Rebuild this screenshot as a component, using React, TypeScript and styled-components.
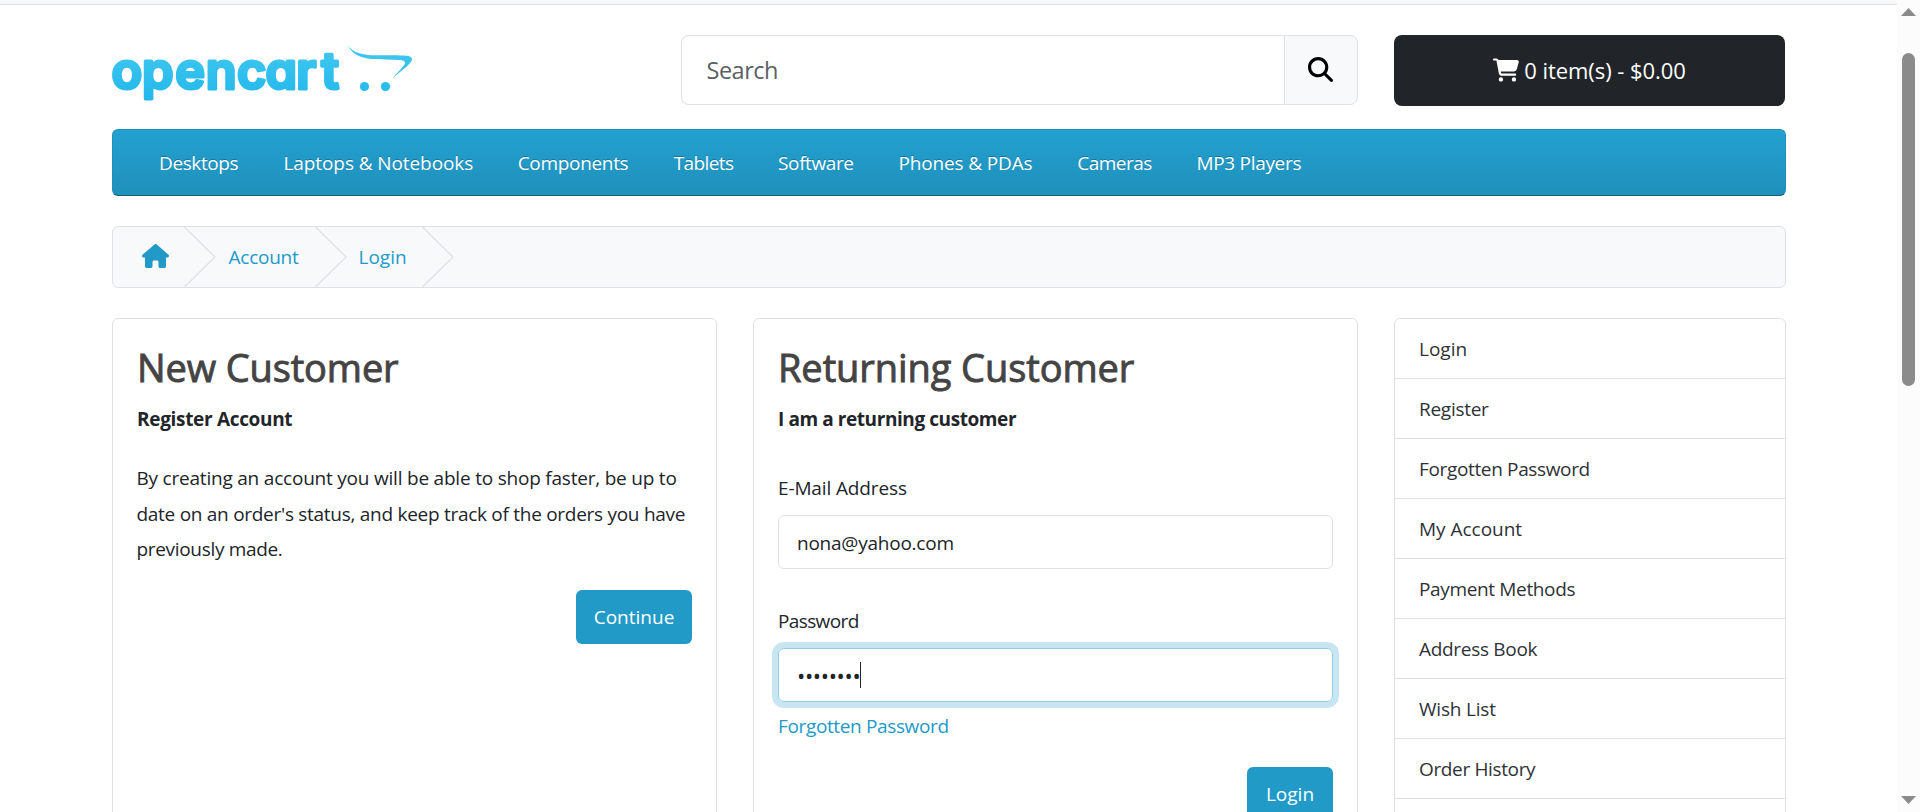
import React from 'react';
import styled, { createGlobalStyle } from 'styled-components';
import { FaHouse, FaMagnifyingGlass, FaCartShopping } from 'react-icons/fa6';

const GlobalStyle = createGlobalStyle`
  *, *::before, *::after { box-sizing: border-box; }
  html, body { margin: 0; padding: 0; height: 812px; overflow: hidden; background: #fff; }
  body {
    font-family: "Open Sans", "Noto Sans", sans-serif;
    font-size: 19px;
    line-height: 36px;
    color: #212529;
    letter-spacing: -0.27px;
  }
  input, button { font: inherit; letter-spacing: inherit; color: inherit; margin: 0; }
  a { color: inherit; text-decoration: none; }
`;

const Viewport = styled.div`
  display: flex;
  height: 812px;
  overflow: hidden;
`;

const Page = styled.div`
  flex: 1;
  min-width: 0;
`;

const TopBar = styled.div`
  height: 5px;
  background: #f8f9fa;
  border-bottom: 1px solid #dee2e6;
`;

const Container = styled.div`
  width: 1674px;
  margin-left: 112px;
`;

const Header = styled.header`
  display: flex;
  align-items: flex-start;
  height: 124px;
  padding-top: 30px;
`;

const LogoLink = styled.a`
  width: 569px;
  height: 71px;
`;

const LogoSvg = styled.svg`
  display: block;
  overflow: visible;
`;

const Wordmark = styled.text`
  font-family: Inter, sans-serif;
  font-weight: 600;
  font-size: 50.5px;
  letter-spacing: 0;
  font-feature-settings: "cv11";
`;

const SearchGroup = styled.form`
  display: flex;
  width: 677px;
  height: 70px;
`;

const SearchInput = styled.input`
  flex: 1;
  min-width: 0;
  padding: 0 25px 0 24.5px;
  border: 1px solid #dee2e6;
  border-right: 0;
  border-radius: 8px 0 0 8px;
  background: #fff;
  font-size: 23.5px;
  letter-spacing: -0.5px;
  outline: none;
  &::placeholder { color: #5b6065; opacity: 1; }
`;

const SearchButton = styled.button`
  display: flex;
  align-items: center;
  justify-content: center;
  width: 74px;
  padding: 0 2px 1px 0;
  border: 1px solid #dee2e6;
  border-radius: 0 8px 8px 0;
  background: #f8f9fa;
  color: #000;
`;

const CartButton = styled.button`
  display: flex;
  align-items: center;
  justify-content: center;
  gap: 5px;
  width: 391px;
  height: 71px;
  margin-left: 36px;
  padding: 0 0 2px;
  border: 0;
  border-radius: 8px;
  background: #212529;
  color: #fff;
  font-size: 22px;
  letter-spacing: -0.06px;
`;

const Menu = styled.nav`
  display: grid;
  grid-template-columns: 124.5px 234.2px 156px 104.4px 120.4px 178.9px 119.1px auto;
  align-items: center;
  height: 67px;
  padding: 1px 0 0 46px;
  border: 1px solid #1f90bb;
  border-bottom-color: #145e7a;
  border-radius: 6px;
  background: linear-gradient(to bottom, #23a1d1, #1f90bb);
  color: #fff;
  text-shadow: 0 -1px 0 rgba(0, 0, 0, 0.25);
`;

const MenuLink = styled.a<{ $track: number }>`
  letter-spacing: ${(p) => p.$track}px;
`;

const Crumbs = styled.div`
  display: flex;
  align-items: center;
  height: 62px;
  margin: 30px 0;
  border: 1px solid #dee2e6;
  border-radius: 6px;
  background: #f8f9fa;
  color: #229ac8;
`;

const Crumb = styled.a<{ $width: number; $indent: number; $track?: number }>`
  display: flex;
  align-items: center;
  width: ${(p) => p.$width}px;
  padding-left: ${(p) => p.$indent}px;
  letter-spacing: ${(p) => p.$track ?? 0}px;
`;

const HomeIcon = styled(FaHouse)`
  width: 27px;
  height: 24px;
  margin-bottom: 3px;
`;

const ChevronSvg = styled.svg`
  flex: none;
  display: block;
  fill: none;
  stroke: #dfe3e7;
`;

const Columns = styled.div`
  display: grid;
  grid-template-columns: 605px 605px 392px;
  column-gap: 36px;
  align-items: start;
`;

const Card = styled.section`
  height: 560px;
  padding: 24px;
  border: 1px solid #dee2e6;
  border-radius: 6px;
`;

const Title = styled.h2<{ $track: number }>`
  margin: 0;
  font-size: 38px;
  font-weight: 400;
  line-height: 48px;
  letter-spacing: ${(p) => p.$track}px;
  color: #444;
  -webkit-text-stroke: 0.9px #444;
`;

const Lead = styled.strong<{ $track: number }>`
  display: block;
  margin-top: 10px;
  font-weight: 700;
  letter-spacing: ${(p) => p.$track}px;
`;

const Copy = styled.p`
  margin: 24px 0 22.5px -0.5px;
  line-height: 35.5px;
  white-space: nowrap;
`;

const CopyLine = styled.span<{ $track: number }>`
  display: block;
  letter-spacing: ${(p) => p.$track}px;
`;

const Actions = styled.div`
  display: flex;
  justify-content: flex-end;
`;

const PrimaryButton = styled.button<{ $width: number }>`
  width: ${(p) => p.$width}px;
  height: 54px;
  padding: 0;
  border: 0;
  border-radius: 6px;
  background: #229ac8;
  color: #fff;
  letter-spacing: 0;
`;

const Form = styled.form`
  display: flex;
  flex-direction: column;
`;

const FieldLabel = styled.label<{ $gap: number; $track: number }>`
  margin: ${(p) => p.$gap}px 0 9px;
  letter-spacing: ${(p) => p.$track}px;
`;

const TextInput = styled.input`
  width: 555px;
  height: 54px;
  padding: 1px 18px 0;
  border: 1px solid #dee2e6;
  border-radius: 6px;
  outline: none;
  letter-spacing: -0.23px;
`;

const PasswordBox = styled.div`
  display: flex;
  align-items: center;
  width: 555px;
  height: 54px;
  padding: 0 18px;
  border: 1px solid #91cde4;
  border-radius: 6px;
  box-shadow: 0 0 0 6px #c8e6f1;
  font-size: 22px;
  letter-spacing: -0.36px;
`;

const Caret = styled.span`
  width: 1px;
  height: 26px;
  background: #212529;
`;

const ForgottenLink = styled.a`
  margin: 6px 0 23px;
  color: #229ac8;
  letter-spacing: -0.36px;
`;

const SideList = styled.nav`
  display: flex;
  flex-direction: column;
  height: 560px;
  border: 1px solid #dee2e6;
  border-radius: 6px;
`;

const SideLink = styled.a<{ $track: number }>`
  display: flex;
  align-items: center;
  height: 60px;
  padding-left: 24px;
  border-bottom: 1px solid #dee2e6;
  color: #2e3236;
  letter-spacing: ${(p) => p.$track}px;
`;

const Scrollbar = styled.aside`
  display: flex;
  flex-direction: column;
  align-items: center;
  width: 23px;
  height: 812px;
  padding: 8px 0;
  background: #fcfcfc;
`;

const ScrollArrow = styled.svg`
  display: block;
  fill: #8b8b8b;
`;

const ScrollThumb = styled.div`
  width: 13px;
  height: 333px;
  margin: 37px 0 auto;
  border-radius: 6.5px;
  background: #8b8b8b;
`;

const menu = [
  { label: 'Desktops', track: -0.39 },
  { label: 'Laptops & Notebooks', track: -0.09 },
  { label: 'Components', track: -0.32 },
  { label: 'Tablets', track: -0.6 },
  { label: 'Software', track: -0.4 },
  { label: 'Phones & PDAs', track: -0.15 },
  { label: 'Cameras', track: -0.55 },
  { label: 'MP3 Players', track: -0.31 },
];

const accountLinks = [
  { label: 'Login', track: 0 },
  { label: 'Register', track: -0.27 },
  { label: 'Forgotten Password', track: -0.35 },
  { label: 'My Account', track: -0.02 },
  { label: 'Payment Methods', track: -0.35 },
  { label: 'Address Book', track: -0.3 },
  { label: 'Wish List', track: -0.2 },
  { label: 'Order History', track: -0.36 },
];

const Logo = () => (
  <LogoSvg width="302" height="71" viewBox="112 35 302 71">
    <defs>
      <linearGradient id="sky" gradientUnits="userSpaceOnUse" x1="0" y1="46" x2="0" y2="103">
        <stop offset="0" stopColor="#42c8ef" />
        <stop offset="0.75" stopColor="#28bbec" />
        <stop offset="1" stopColor="#22b7e9" />
      </linearGradient>
    </defs>
    <g fill="url(#sky)">
      <Wordmark
        x="111.4 141.9 175.2 205.8 237 265.400 296.300 321.200"
        y="89.4"
        stroke="url(#sky)"
        strokeWidth="3.2"
        strokeLinejoin="round"
      >
        opencart
      </Wordmark>
      <path d="M348 45.5C353 52.5 362 55.3 376 55.3C388 55.3 399 54.8 406.5 55.8C411.5 56.5 413.2 58.4 411.2 61.6C408 66.5 400 72 392.7 78C396.5 73.5 401.5 68.5 404.2 65C406.3 62.2 404.5 60.5 400 60C391 59.2 380 60 371 59C358 57.6 351.5 53 348 45.5Z" />
      <circle cx="364.5" cy="86.5" r="4.6" />
      <circle cx="385.5" cy="86.5" r="4.6" />
    </g>
  </LogoSvg>
);

const Chevron = () => (
  <ChevronSvg width="32" height="60" viewBox="0 0 32 60">
    <path d="M0.5 0L31 30L0.5 60" strokeWidth="1.3" />
  </ChevronSvg>
);

export default function App() {
  return (
    <>
      <GlobalStyle />
      <Viewport>
        <Page>
          <TopBar />
          <Container>
            <Header>
              <LogoLink href="#">
                <Logo />
              </LogoLink>
              <SearchGroup>
                <SearchInput placeholder="Search" />
                <SearchButton type="button" aria-label="Search">
                  <FaMagnifyingGlass size={25} />
                </SearchButton>
              </SearchGroup>
              <CartButton type="button">
                <FaCartShopping size={26} />
                <span>0 item(s) - $0.00</span>
              </CartButton>
            </Header>

            <Menu>
              {menu.map((m) => (
                <MenuLink key={m.label} href="#" $track={m.track}>
                  {m.label}
                </MenuLink>
              ))}
            </Menu>

            <Crumbs>
              <Crumb href="#" $width={71} $indent={29}>
                <HomeIcon />
              </Crumb>
              <Chevron />
              <Crumb href="#" $width={99} $indent={12.5} $track={-0.24}>
                Account
              </Crumb>
              <Chevron />
              <Crumb href="#" $width={75} $indent={11.5}>
                Login
              </Crumb>
              <Chevron />
            </Crumbs>

            <Columns>
              <Card>
                <Title $track={-0.13}>New Customer</Title>
                <Lead $track={-0.32}>Register Account</Lead>
                <Copy>
                  <CopyLine $track={-0.21}>
                    By creating an account you will be able to shop faster, be up to
                  </CopyLine>
                  <CopyLine $track={-0.28}>
                    date on an order's status, and keep track of the orders you have
                  </CopyLine>
                  <CopyLine $track={-0.32}>previously made.</CopyLine>
                </Copy>
                <Actions>
                  <PrimaryButton type="button" $width={116}>
                    Continue
                  </PrimaryButton>
                </Actions>
              </Card>

              <Card>
                <Title $track={-0.08}>Returning Customer</Title>
                <Lead $track={-0.42}>I am a returning customer</Lead>
                <Form>
                  <FieldLabel $gap={33} $track={-0.13}>
                    E-Mail Address
                  </FieldLabel>
                  <TextInput readOnly value="nona@yahoo.com" />
                  <FieldLabel $gap={34} $track={-0.62}>
                    Password
                  </FieldLabel>
                  <PasswordBox>
                    ••••••••
                    <Caret />
                  </PasswordBox>
                  <ForgottenLink href="#">Forgotten Password</ForgottenLink>
                  <Actions>
                    <PrimaryButton type="button" $width={86}>
                      Login
                    </PrimaryButton>
                  </Actions>
                </Form>
              </Card>

              <SideList>
                {accountLinks.map((item) => (
                  <SideLink key={item.label} href="#" $track={item.track}>
                    {item.label}
                  </SideLink>
                ))}
              </SideList>
            </Columns>
          </Container>
        </Page>
        <Scrollbar>
          <ScrollArrow width="15" height="8" viewBox="0 0 15 8">
            <path d="M0 8L7.5 0L15 8Z" />
          </ScrollArrow>
          <ScrollThumb />
          <ScrollArrow width="15" height="8" viewBox="0 0 15 8">
            <path d="M0 0L7.5 8L15 0Z" />
          </ScrollArrow>
        </Scrollbar>
      </Viewport>
    </>
  );
}
